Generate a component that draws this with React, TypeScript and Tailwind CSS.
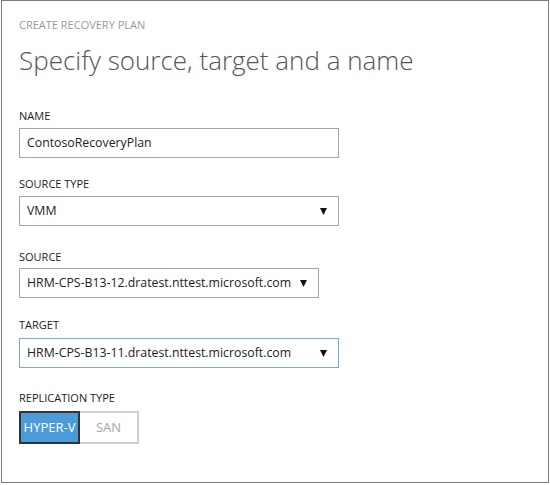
import React from "react";

const font = { fontFamily: '"Open Sans", "Noto Sans", Arial, sans-serif' };

function Label({ children }: { children: React.ReactNode }) {
  return (
    <div className="text-[11px] leading-[14px] text-[#222] font-medium">
      {children}
    </div>
  );
}

function Caret() {
  return (
    <svg width="7" height="7" viewBox="0 0 7 7" className="shrink-0">
      <path d="M0 0 H7 L3.5 7 Z" fill="#111" />
    </svg>
  );
}

function Select({
  value,
  width,
  focused,
}: {
  value: string;
  width: string;
  focused?: boolean;
}) {
  return (
    <div
      className={`${width} h-[30px] flex items-center justify-between pl-[7px] pr-[11px] border ${
        focused ? "border-[#7aa7e8]" : "border-[#a6a6a6]"
      } text-[12.3px] text-[#222] whitespace-nowrap`}
    >
      <span>{value}</span>
      <Caret />
    </div>
  );
}

export default function App() {
  return (
    <div className="w-[550px] h-[485px] bg-white" style={font}>
      <div className="ml-[1px] w-[548px] h-[483px] border border-[#7a7a7a] pl-[17px] pt-[17px]">
        <div className="text-[11px] leading-[14px] text-[#9a9a9a] font-medium">
          CREATE RECOVERY PLAN
        </div>
        <div className="mt-[11px] text-[26px] leading-[34px] font-light text-[#555]">
          Specify source, target and a name
        </div>

        <div className="mt-[32px]">
          <Label>NAME</Label>
          <div className="mt-[5px] w-[320px] h-[30px] flex items-center pl-[7px] border border-[#a6a6a6] text-[12.3px] text-[#222]">
            ContosoRecoveryPlan
          </div>
        </div>

        <div className="mt-[19px]">
          <Label>SOURCE TYPE</Label>
          <div className="mt-[5px]">
            <Select value="VMM" width="w-[320px]" />
          </div>
        </div>

        <div className="mt-[24px]">
          <Label>SOURCE</Label>
          <div className="mt-[4px]">
            <Select value="HRM-CPS-B13-12.dratest.nttest.microsoft.com" width="w-[300px]" />
          </div>
        </div>

        <div className="mt-[20px]">
          <Label>TARGET</Label>
          <div className="mt-[6px]">
            <Select value="HRM-CPS-B13-11.dratest.nttest.microsoft.com" width="w-[320px]" focused />
          </div>
        </div>

        <div className="mt-[23px]">
          <Label>REPLICATION TYPE</Label>
          <div className="mt-[6px] flex">
            <div className="w-[61px] h-[33px] flex items-center justify-center bg-[#4a9bd8] border-2 border-[#333] text-white text-[13px]">
              HYPER-V
            </div>
            <div className="w-[59px] h-[33px] flex items-center justify-center border-2 border-l-0 border-[#cfcfcf] text-[#a6a6a6] text-[13px]">
              SAN
            </div>
          </div>
        </div>
      </div>
    </div>
  );
}
